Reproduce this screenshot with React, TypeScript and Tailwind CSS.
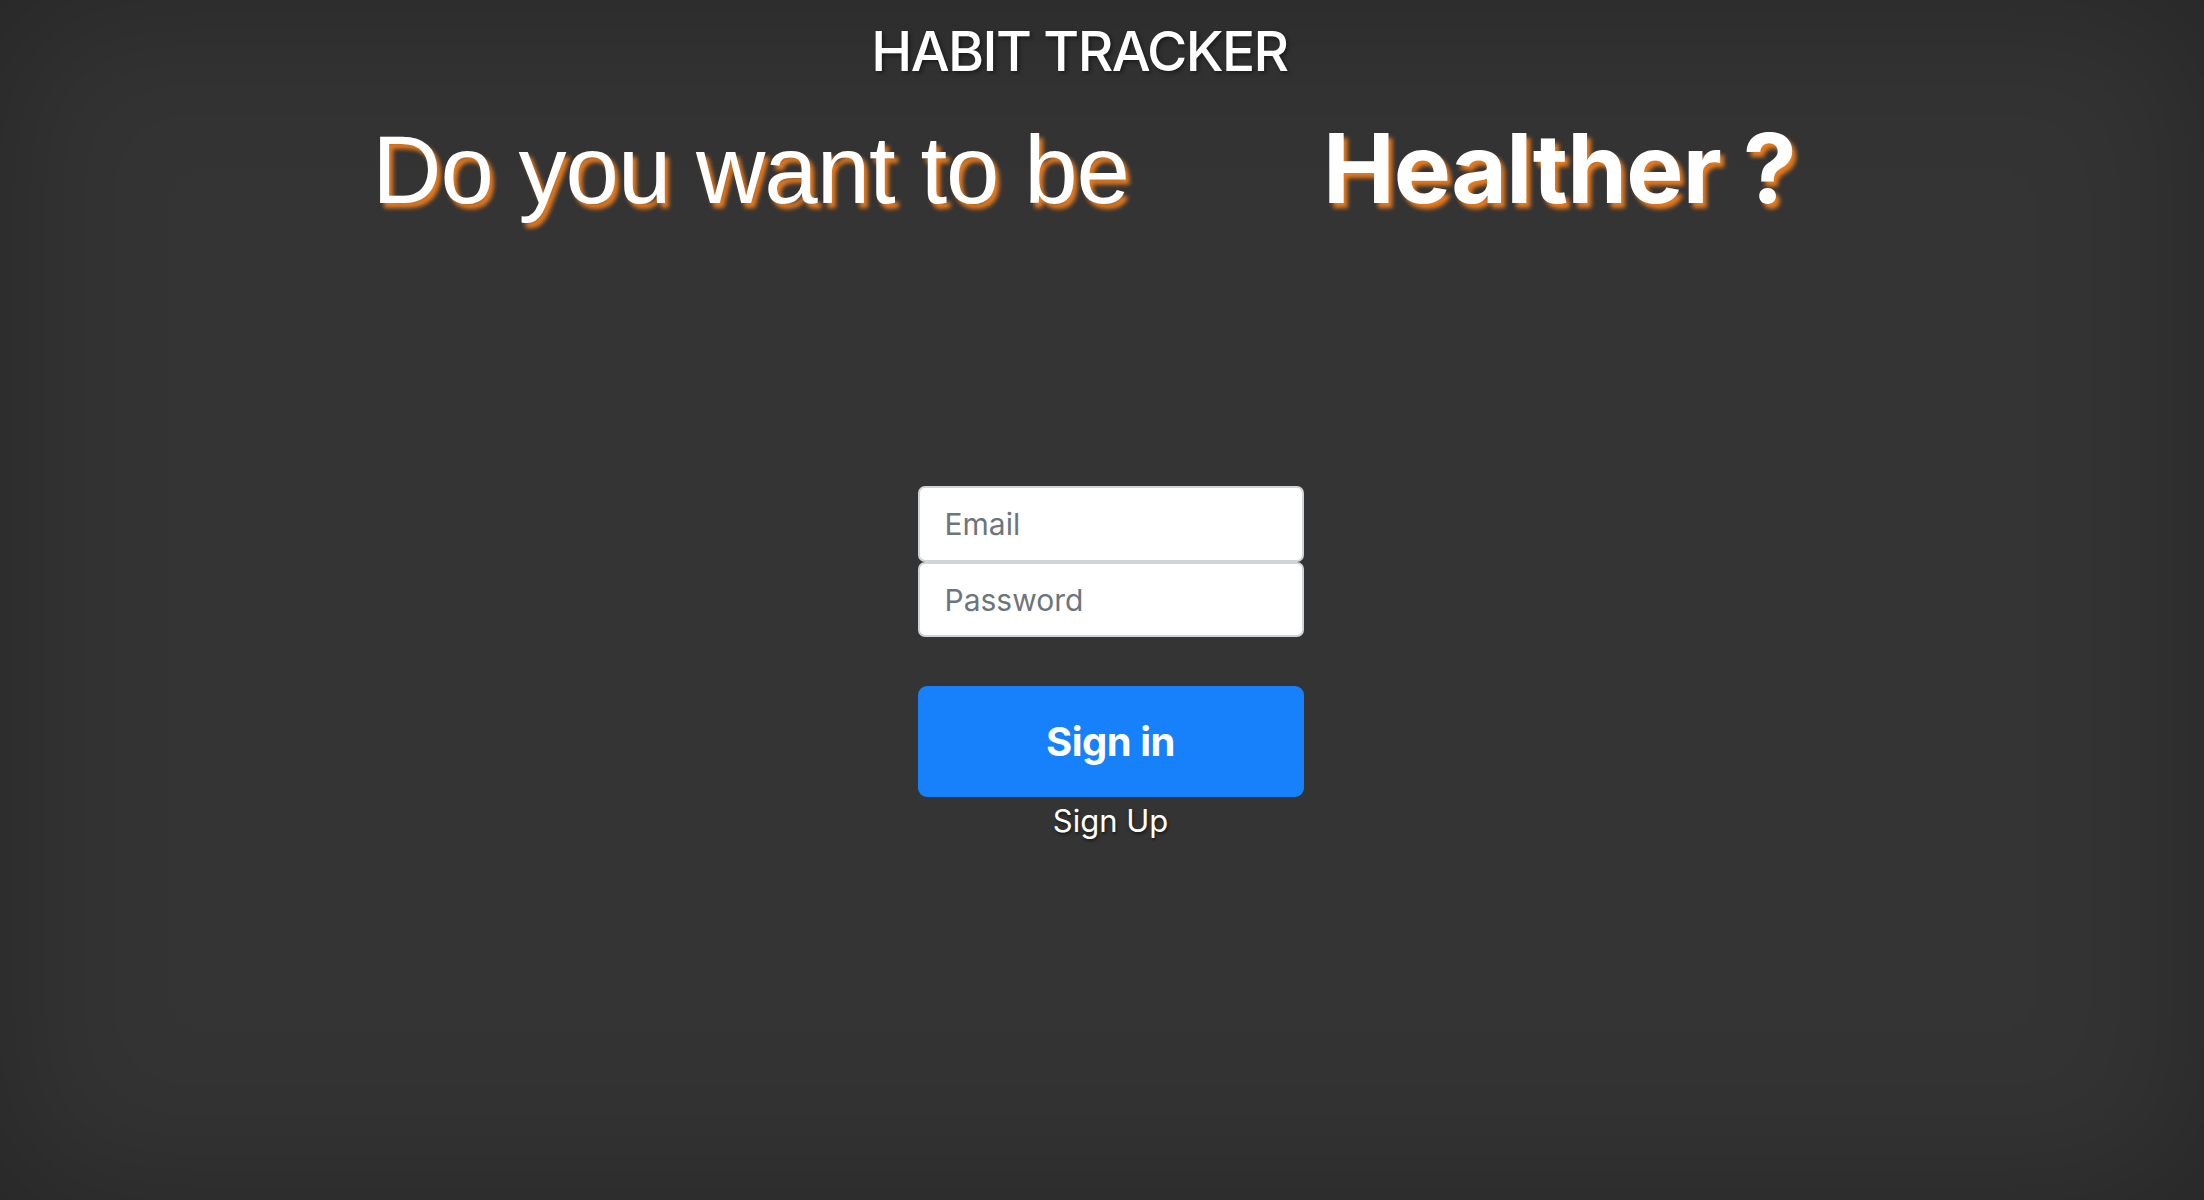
import React from "react";

export default function App() {
  return (
    <div
      className="w-full h-[1200px] bg-[#343434] shadow-[inset_0_0_160px_rgba(0,0,0,0.28)] flex flex-col overflow-hidden"
      style={{ fontFamily: "Inter, 'Noto Sans', sans-serif" }}
    >
      <h1 className="pt-[18px] pr-[45px] text-center text-[55px] leading-[1.2] font-medium tracking-[-1.6px] text-white [text-shadow:2px_2px_4px_rgba(0,0,0,0.45)]">
        HABIT TRACKER
      </h1>

      <div className="mt-[36px] flex flex-row items-baseline justify-center pr-[36px] gap-[194px] text-white text-[96px] leading-none">
        <span
          className="tracking-[-1px] [text-shadow:4px_5px_4px_#e57a1f]"
          style={{ fontFamily: "'Liberation Sans', Arial, sans-serif" }}
        >
          Do you want to be
        </span>
        <span className="font-bold tracking-[-0.8px] [text-shadow:4px_5px_4px_#e57a1f]">
          Healther ?
        </span>
      </div>

      <div className="mt-[268px] flex justify-center pl-[17px]">
        <form className="w-[386px] flex flex-col" onSubmit={(e) => e.preventDefault()}>
          <input
            type="email"
            placeholder="Email"
            className="h-[76px] w-full rounded-[7px] border-2 border-[#cfd4d9] bg-white px-[25px] text-[30px] text-[#212529] placeholder:text-[#6c757d] outline-none"
          />
          <input
            type="password"
            placeholder="Password"
            className="h-[75px] w-full rounded-[7px] border-2 border-[#cfd4d9] bg-white px-[25px] text-[30px] text-[#212529] placeholder:text-[#6c757d] outline-none"
          />
          <button
            type="submit"
            className="mt-[49px] h-[111px] w-full rounded-[9px] bg-[#1781fb] text-white text-[40px] font-bold tracking-[-0.5px]"
          >
            Sign in
          </button>
          <a className="mt-[1px] block text-center text-[31px] leading-[1.5] text-white [text-shadow:1px_2px_3px_rgba(0,0,0,0.5)] cursor-pointer">
            Sign Up
          </a>
        </form>
      </div>
    </div>
  );
}
